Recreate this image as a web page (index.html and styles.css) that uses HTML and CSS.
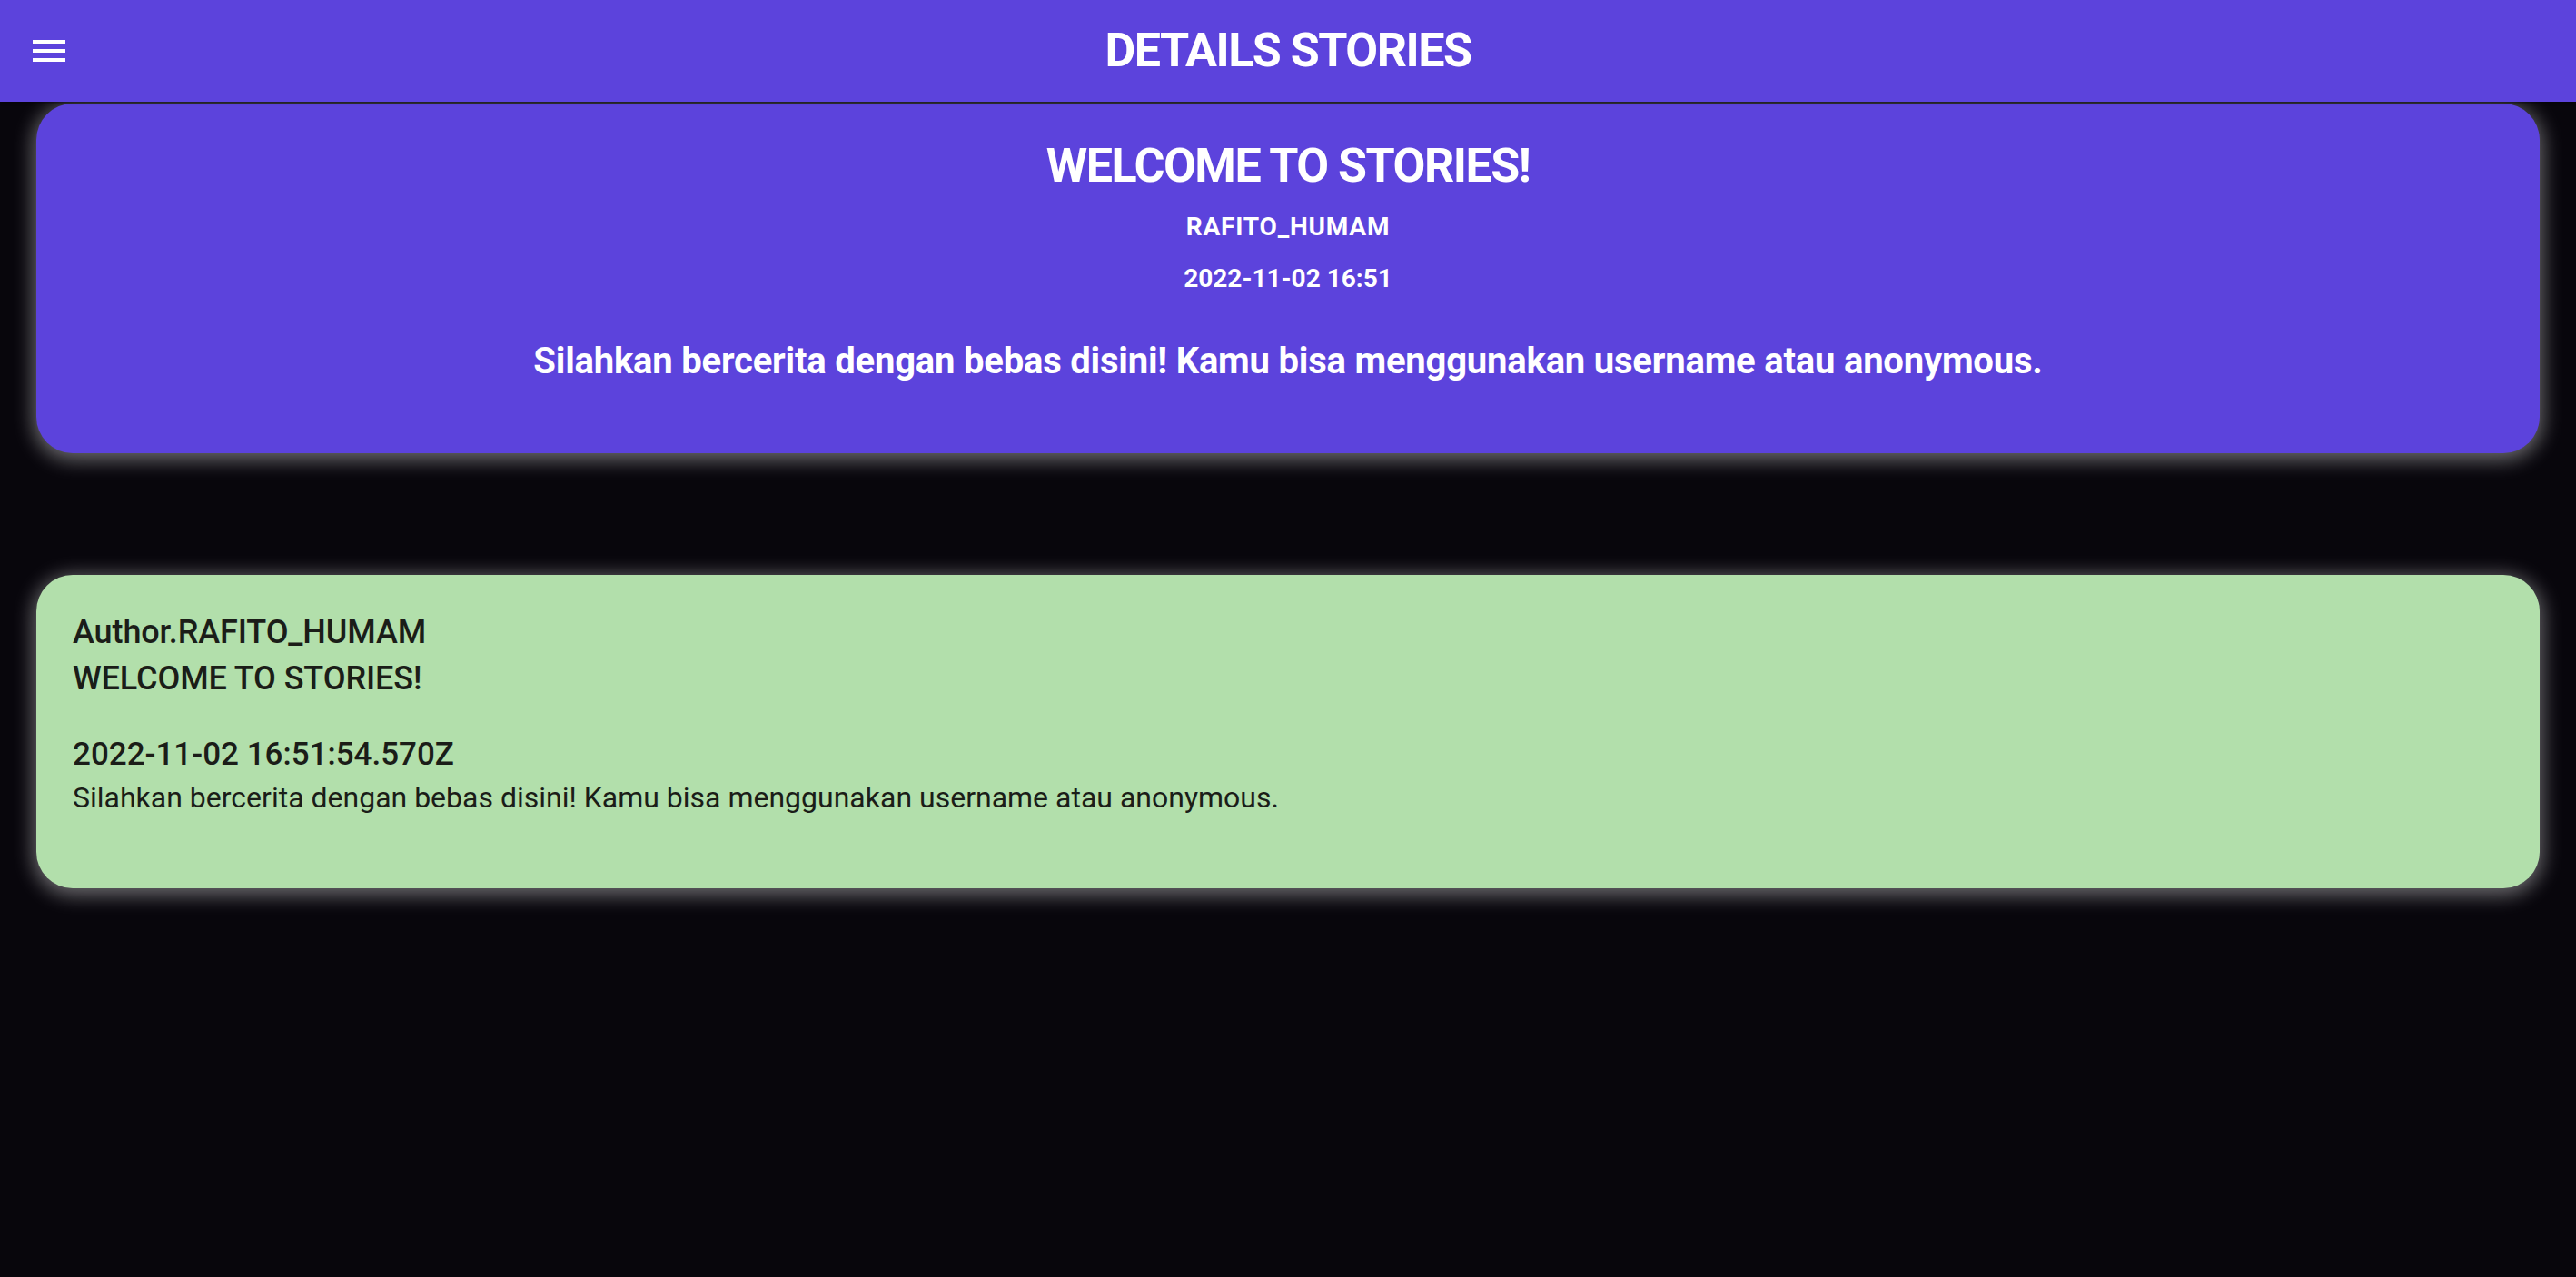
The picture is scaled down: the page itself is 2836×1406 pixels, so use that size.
FILE: index.html
```html
<!DOCTYPE html>
<html lang="id">
<head>
<meta charset="utf-8">
<title>Details Stories</title>
<link rel="stylesheet" href="styles.css">
</head>
<body>
<header class="appbar">
  <div class="appbar-lead">
    <svg class="menu-icon" viewBox="0 0 24 24" width="48" height="48" aria-hidden="true">
      <path fill="#ffffff" d="M3 18h18v-2H3v2zm0-5h18v-2H3v2zm0-7v2h18V6H3z"/>
    </svg>
  </div>
  <h1 class="appbar-title">DETAILS STORIES</h1>
  <div class="appbar-trail"></div>
</header>
<main class="content">
  <section class="hero-card">
    <h2 class="hero-title">WELCOME TO STORIES!</h2>
    <p class="hero-author">RAFITO_HUMAM</p>
    <p class="hero-date">2022-11-02 16:51</p>
    <p class="hero-body">Silahkan bercerita dengan bebas disini! Kamu bisa menggunakan username atau anonymous.</p>
  </section>
  <section class="detail-card">
    <p class="detail-head">Author.RAFITO_HUMAM</p>
    <p class="detail-head">WELCOME TO STORIES!</p>
    <p class="detail-date">2022-11-02 16:51:54.570Z</p>
    <p class="detail-body">Silahkan bercerita dengan bebas disini! Kamu bisa menggunakan username atau anonymous.</p>
  </section>
</main>
</body>
</html>
```
FILE: styles.css
```css
* { box-sizing: border-box; }
html, body {
  margin: 0;
  padding: 0;
}
body {
  background: #08060c;
  font-family: Roboto, "Liberation Sans", sans-serif;
  min-height: 1406px;
}
.appbar {
  position: relative;
  z-index: 2;
  height: 112px;
  background: #5c43dc;
  display: grid;
  grid-template-columns: 1fr auto 1fr;
  align-items: center;
  box-shadow: 0 1px 3px rgba(0, 0, 0, 0.45);
}
.appbar-lead {
  display: flex;
  align-items: center;
  padding-left: 30px;
}
.menu-icon { display: block; }
.appbar-title {
  margin: 0;
  color: #ffffff;
  font-size: 52px;
  font-weight: 700;
  line-height: 1;
  letter-spacing: -1.5px;
}
.content {
  padding: 2px 40px 0;
}
.hero-card {
  background: #5c43dc;
  border-radius: 40px;
  padding: 38px 40px 78px;
  text-align: center;
  color: #ffffff;
  box-shadow: 0 4px 22px 3px rgba(255, 255, 255, 0.42);
}
.hero-title {
  margin: 0;
  font-size: 52px;
  font-weight: 700;
  line-height: 61px;
  letter-spacing: -1.5px;
}
.hero-author {
  margin: 20px 0 0;
  font-size: 28px;
  font-weight: 700;
  line-height: 33px;
  letter-spacing: 0.8px;
}
.hero-date {
  margin: 24px 0 0;
  font-size: 28px;
  font-weight: 700;
  line-height: 33px;
}
.hero-body {
  margin: 51px 0 0;
  font-size: 40px;
  font-weight: 700;
  line-height: 47px;
  letter-spacing: -0.2px;
}
.detail-card {
  margin-top: 134px;
  background: #b2dfab;
  border-radius: 40px;
  padding: 38px 40px 81px;
  color: #1b1d18;
  box-shadow: 0 4px 22px 3px rgba(255, 255, 255, 0.42);
}
.detail-head {
  margin: 0;
  font-size: 36px;
  font-weight: 500;
  line-height: 51px;
  letter-spacing: -0.1px;
}
.detail-date {
  margin: 32px 0 0;
  font-size: 35px;
  font-weight: 500;
  line-height: 51px;
}
.detail-body {
  margin: 4px 0 0;
  font-size: 32px;
  font-weight: 400;
  line-height: 37px;
}
```
